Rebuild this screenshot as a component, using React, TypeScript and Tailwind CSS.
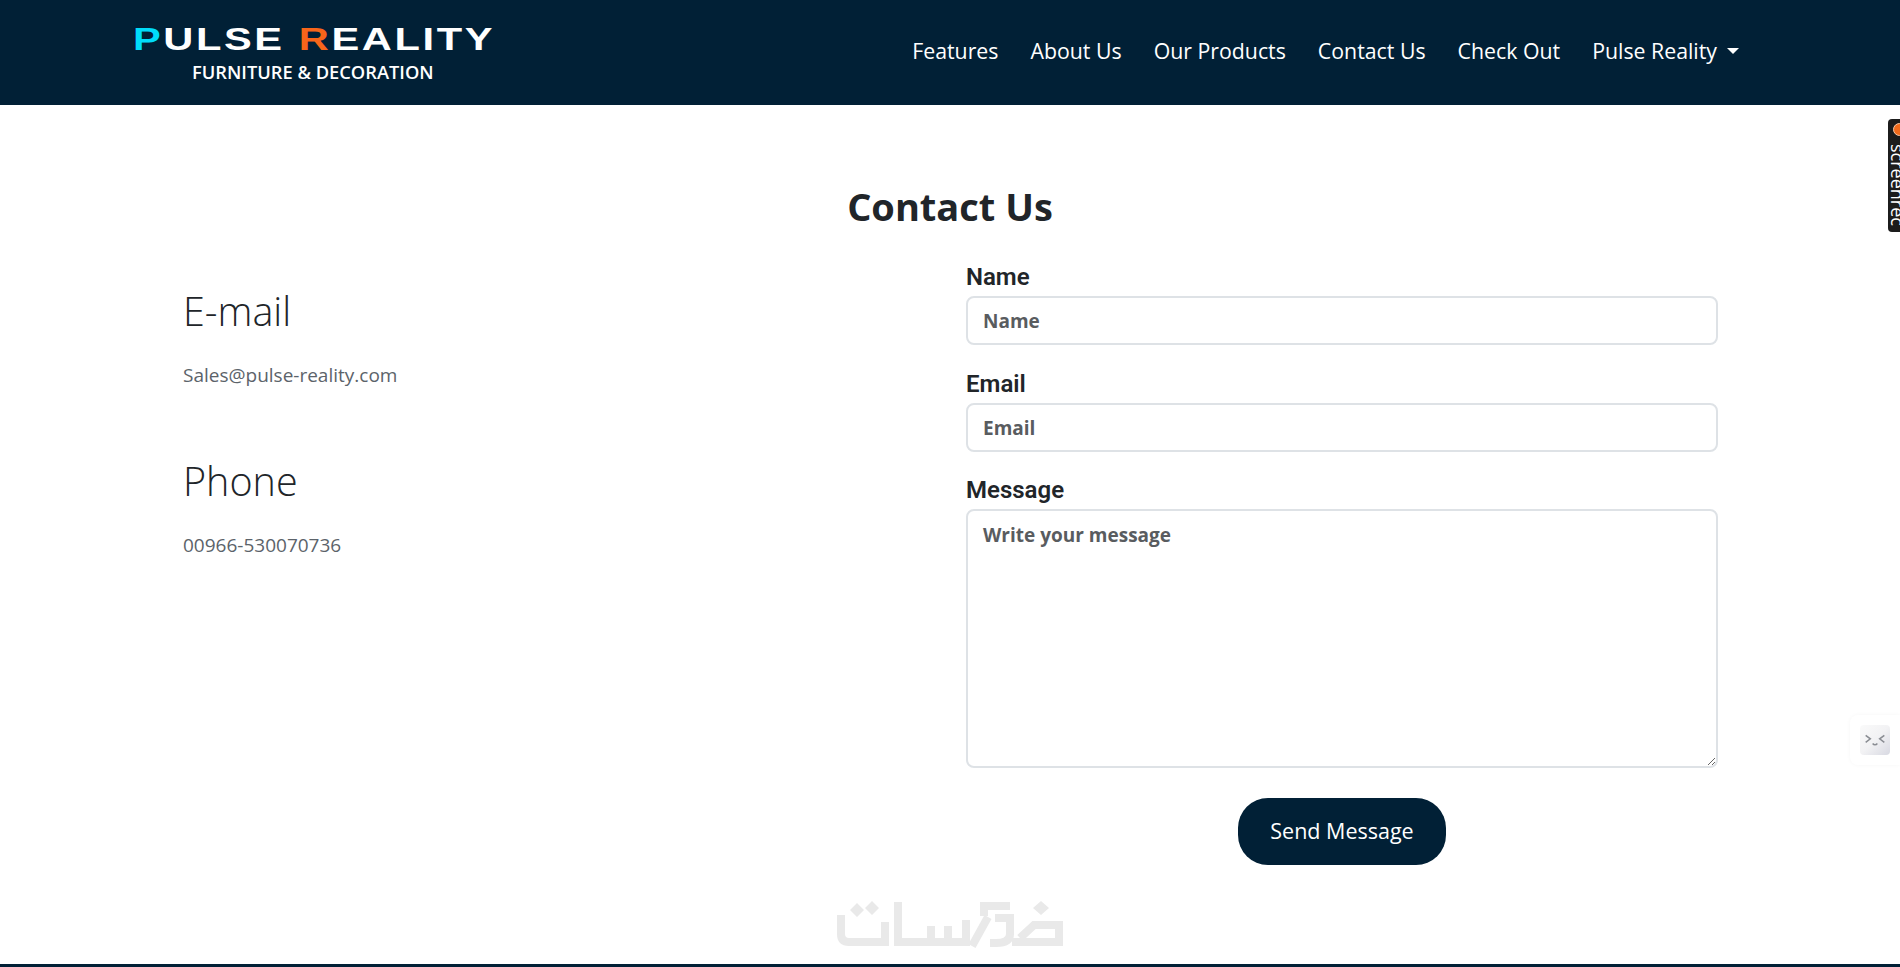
const uiFont = "font-['Open_Sans','Noto_Sans',sans-serif]";

const navLinks = ['Features', 'About Us', 'Our Products', 'Contact Us', 'Check Out'];

function Logo() {
  return (
    <div className="flex flex-col items-start w-[360px]">
      <div className="font-['Liberation_Sans',sans-serif] font-bold text-[32px] leading-[32px] tracking-[2px] whitespace-nowrap text-white origin-left scale-x-[1.3]">
        <span className="text-[#00dcfa]">P</span>ULSE <span className="text-[#f7651a]">R</span>EALITY
      </div>
      <div className="ml-[59px] mt-[6px] text-[18.3px] leading-[22px] font-semibold text-white whitespace-nowrap">
        FURNITURE &amp; DECORATION
      </div>
    </div>
  );
}

function Header() {
  return (
    <header className="h-[105px] bg-[#012036] flex items-center justify-between pl-[133px] pr-[161px] shrink-0">
      <div className="mt-[1px]">
        <Logo />
      </div>
      <nav className="flex items-center gap-[32px] text-[21.3px] text-white -mt-[4px]">
        {navLinks.map(link => (
          <a key={link} href="#" className="whitespace-nowrap">{link}</a>
        ))}
        <a href="#" className="flex items-center whitespace-nowrap">
          Pulse Reality
          <span className="ml-[10px] border-x-[6px] border-t-[6px] border-x-transparent border-t-white" />
        </a>
      </nav>
    </header>
  );
}

function ContactInfo({ title, value }: { title: string; value: string }) {
  return (
    <div className="mb-[68px]">
      <h3 className="text-[39.5px] leading-[48px] font-[350] text-[#212529]">{title}</h3>
      <p className="mt-[26px] text-[19px] leading-[28px] text-[#5c636a]">{value}</p>
    </div>
  );
}

function Watermark() {
  return (
    <svg
      className="absolute left-[836px] top-[900px] w-[228px] h-[50px]"
      viewBox="836 900 228 50"
      fill="none"
      stroke="#e9e9e9"
      strokeWidth="8"
    >
      <path d="M841 915V934Q841 942 849 942H885V922" />
      <path d="M898 902V942H966V920M931 926V942M948 926V942" />
      <path d="M984 902V916M980 906H1010M988 917L972 946" />
      <path d="M995 918H1010V934Q1010 943 996 943H990" />
      <path d="M1012 942H1059V925H1034L1020 938" />
      <path fill="#e9e9e9" stroke="none" d="M857 903l7 7-7 7-7-7zM872 901l7 7-7 7-7-7zM1041 901l8 7-8 7-8-7z" />
    </svg>
  );
}

export default function App() {
  const fieldClass = `mt-[5px] rounded-[8px] border-2 border-[#dee2e6] px-[15px] text-[19px] font-bold placeholder:text-[#595c5f] ${uiFont}`;
  const labelClass = 'text-[24px] leading-[28px] font-semibold text-[#212529]';

  return (
    <div className={`relative h-[967px] overflow-hidden flex flex-col bg-white ${uiFont}`}>
      <Header />

      <main className="flex-1">
        <h1 className="mt-[77px] text-center text-[38px] leading-[48px] font-bold text-[#212529]">Contact Us</h1>

        <div className="flex mt-[33px]">
          <div className="w-[966px] pl-[183px] pt-[24px]">
            <ContactInfo title="E-mail" value="Sales@pulse-reality.com" />
            <ContactInfo title="Phone" value="00966-530070736" />
          </div>

          <form className="w-[752px] flex flex-col font-['Roboto',sans-serif]">
            <label className={labelClass}>Name</label>
            <input placeholder="Name" className={`${fieldClass} h-[49px]`} />
            <label className={`mt-[25px] ${labelClass}`}>Email</label>
            <input placeholder="Email" className={`${fieldClass} h-[49px]`} />
            <label className={`mt-[24px] ${labelClass}`}>Message</label>
            <textarea placeholder="Write your message" className={`${fieldClass} h-[259px] py-[10px]`} />
            <button
              type="button"
              className={`mt-[30px] self-center w-[208px] h-[67px] rounded-[30px] bg-[#012036] text-white text-[21.5px] ${uiFont}`}
            >
              Send Message
            </button>
          </form>
        </div>
      </main>

      <div className="h-[3px] bg-[#012036] shrink-0" />

      <Watermark />

      {/* browser extension tab */}
      <div className="absolute right-0 top-[119px] w-[12px] h-[113px] bg-[#1c1c1c] rounded-l-[4px] overflow-hidden">
        <div className="absolute left-[5px] top-[4px] w-[13px] h-[13px] rounded-full bg-[#f26a1b] border border-[#f9c9a8]" />
        <div className="absolute left-0 top-[25px] [writing-mode:vertical-rl] text-[18px] leading-[20px] text-white whitespace-nowrap">
          screenrec
        </div>
      </div>

      {/* chat widget */}
      <div className="absolute right-0 top-[715px] w-[50px] h-[50px] rounded-l-[8px] flex items-center justify-center shadow-[0_0_4px_rgba(0,0,0,0.04)]">
        <div className="w-[30px] h-[30px] rounded-[4px] bg-gradient-to-br from-[#fafafa] via-[#f2f2f4] to-[#d8d9e2] flex items-center justify-center">
          <svg width="24" height="14" viewBox="0 0 20 12" fill="none" stroke="#8a8d93" strokeWidth="1.3">
            <path d="M2 2l4 3-4 3M18 2l-4 3 4 3M8 9c1 1.500 3 1.500 4 0" />
          </svg>
        </div>
      </div>
    </div>
  );
}
